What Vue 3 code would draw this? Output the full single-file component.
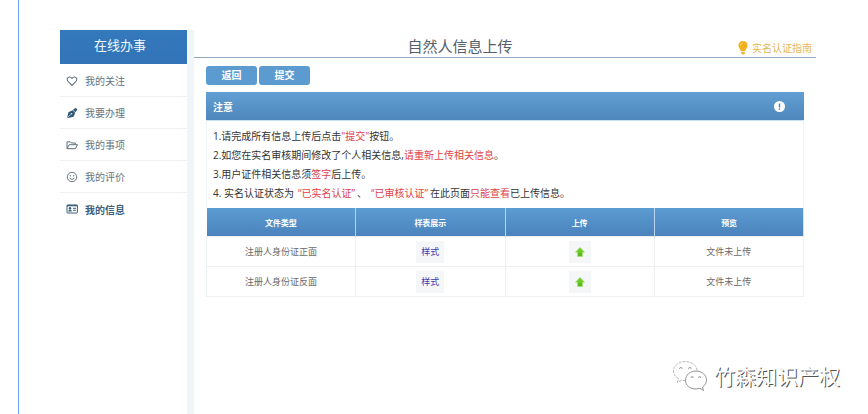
<script setup>
import { ref } from 'vue'

const active = ref('info')
const menu = [
  { id: 'heart', label: '我的关注' },
  { id: 'pen', label: '我要办理' },
  { id: 'folder', label: '我的事项' },
  { id: 'smile', label: '我的评价' },
  { id: 'info', label: '我的信息' },
]
const columns = ['文件类型', '样表展示', '上传', '预览']
const files = [
  { name: '注册人身份证正面', status: '文件未上传' },
  { name: '注册人身份证反面', status: '文件未上传' },
]
</script>

<template>
  <div class="page">
    <div class="layout">
      <aside class="sidebar">
        <h2 class="side-title">在线办事</h2>
        <nav class="side-nav">
          <a
            v-for="item in menu"
            :key="item.id"
            href="#"
            class="side-link"
            :class="{ active: item.id === active }"
            @click.prevent="active = item.id"
          >
            <svg v-if="item.id === 'heart'" class="side-icon" viewBox="0 0 12 12">
              <path d="M6 10.3 2 6.4C.6 4.9 1 2.3 3.3 2 4.6 1.900 5.500 2.700 6 3.500 6.500 2.700 7.400 1.900 8.700 2 11 2.300 11.400 4.900 10 6.400Z" fill="none" stroke="#647480" stroke-width="1.1" stroke-linejoin="round" />
            </svg>
            <svg v-else-if="item.id === 'pen'" class="side-icon" viewBox="0 0 12 12">
              <path d="M1.2 10.8 2.4 5.2 6.6 3.2 9.200 5.800 7.600 9.800 2 11Z" fill="#315878" />
              <path d="M7 3 8.500 1.400Q9.500.5 10.600 1.500 11.600 2.500 10.700 3.500L9.300 5.300Z" fill="#315878" />
              <path d="M1.600 10.500 4.800 7.300" stroke="#dfe8ef" stroke-width=".7" />
              <circle cx="5.500" cy="6.700" r=".8" fill="#dfe8ef" />
            </svg>
            <svg v-else-if="item.id === 'folder'" class="side-icon" viewBox="0 0 12 12">
              <path d="M1 9.500V2.800H4.200L5.300 4H9.300V5.700M1 9.700 3.200 5.700H11.500L9.400 9.700Z" fill="none" stroke="#5d717e" stroke-width="1" stroke-linejoin="round" />
            </svg>
            <svg v-else-if="item.id === 'smile'" class="side-icon" viewBox="0 0 12 12">
              <circle cx="6" cy="6" r="4.700" fill="none" stroke="#6b7880" stroke-width="1" />
              <path d="M3.600 7.200Q6 9.700 8.400 7.200" fill="none" stroke="#6b7880" stroke-width="1" />
              <circle cx="4.300" cy="4.700" r=".7" fill="#6b7880" />
              <circle cx="7.700" cy="4.700" r=".7" fill="#6b7880" />
            </svg>
            <svg v-else class="side-icon" viewBox="0 0 12 12">
              <rect x="1" y="2" width="10.400" height="8" rx=".6" fill="#fff" stroke="#3b5f7c" />
              <path d="M1 2.600H11.400" stroke="#3b5f7c" stroke-width="1.400" />
              <circle cx="4" cy="5.200" r="1.200" fill="#3b5f7c" />
              <path d="M2.200 8.500Q2.400 6.500 4 6.500T5.800 8.500Z" fill="#3b5f7c" />
              <path d="M7 5.300H10M7 7.300H10" stroke="#3b5f7c" stroke-width="1" />
            </svg>
            <span>{{ item.label }}</span>
          </a>
        </nav>
      </aside>

      <main class="main">
        <header class="main-head">
          <h1>自然人信息上传</h1>
          <a href="#" class="guide">
            <svg class="bulb" viewBox="0 0 10 14">
              <path d="M5 0C2.100 0 .4 2 .4 4.500.4 6.900 2.300 7.800 2.800 10H7.200C7.700 7.800 9.600 6.900 9.600 4.500 9.600 2 7.900 0 5 0Z" fill="#f2b01c" />
              <path d="M3.100 10.700H6.900V12.200L5.900 13.500H4.100L3.100 12.200Z" fill="#edb945" />
              <path d="M2.400 4.300Q2.600 2.300 4.700 2" fill="none" stroke="#ffe49a" stroke-width=".8" />
            </svg>
            <span>实名认证指南</span>
          </a>
        </header>

        <div class="content">
          <div class="actions">
            <button type="button" class="btn">返回</button>
            <button type="button" class="btn">提交</button>
          </div>

          <section class="notice">
            <div class="notice-head">
              <h3>注意</h3>
              <svg class="alert" viewBox="0 0 10 10">
                <circle cx="5" cy="5" r="5" fill="#fff" />
                <path d="M5 2.200V5.800M5 6.700V7.900" stroke="#4a84b8" stroke-width="1.300" />
              </svg>
            </div>
            <div class="notice-body">
              <p>1.请完成所有信息上传后点击<em>"提交"</em>按钮。</p>
              <p>2.如您在实名审核期间修改了个人相关信息,<em>请重新上传相关信息</em>。</p>
              <p>3.用户证件相关信息须<em>签字</em>后上传。</p>
              <p>4. 实名认证状态为<em class="quoted">“已实名认证”</em>、<em class="quoted">“已审核认证”</em>在此页面<em>只能查看</em>已上传信息。</p>
            </div>
          </section>

          <table class="files">
            <thead>
              <tr>
                <th v-for="c in columns" :key="c" scope="col">{{ c }}</th>
              </tr>
            </thead>
            <tbody>
              <tr v-for="f in files" :key="f.name">
                <td>{{ f.name }}</td>
                <td><a href="#" class="sample">样式</a></td>
                <td>
                  <button type="button" class="upload" :aria-label="'上传' + f.name">
                    <svg viewBox="0 0 10 10">
                      <path d="M5 .5 9.500 5.200H7.400V9.500H2.600V5.200H.5Z" fill="#6ccb25" stroke="#9bdc67" stroke-width=".6" stroke-linejoin="round" />
                      <path d="M3.200 6H6.800V9H3.200Z" fill="#55b81e" />
                    </svg>
                  </button>
                </td>
                <td>{{ f.status }}</td>
              </tr>
            </tbody>
          </table>
        </div>
      </main>
    </div>

    <div class="brand">
      <svg class="brand-icon" viewBox="0 0 36 32">
        <g fill="#fff" stroke-width=".8">
          <path d="M5 22.500 7 19C3.500 17 1.500 14 1.500 11 1.500 5.500 6.800 1.500 13.300 1.500S25 5.500 25 11 19.800 20.700 13.300 20.700L9.500 20.300Z" stroke="#aaa" stroke-dasharray="3 1" />
          <path d="M31.500 30.500 30.500 27C33 25.200 34.500 23 34.500 20.300 34.500 15 29.800 11 24 11S13.500 15 13.500 20.300 18.200 29 24 29L28 28.300Z" stroke="#777" />
        </g>
        <g fill="none" stroke="#888" stroke-width=".9">
          <path d="M7.500 8.800a1.300 1.300 0 0 1 2.600 0M16.500 8.800a1.300 1.300 0 1 1 2.600 0M19 17.800a1.200 1.200 0 0 1 2.400 0M26.500 17.800a1.200 1.200 0 0 1 2.400 0" />
        </g>
      </svg>
      <span>竹森知识产权</span>
    </div>
  </div>
</template>

<style>
body {
  background: #fff;
}
</style>

<style scoped>
.page {
  position: relative;
  box-sizing: border-box;
  min-height: 100vh;
  margin-left: 18px;
  padding: 30px 52px 0 41px;
  border-left: 1px solid #6ea2f5;
  display: flex;
  font-family: "Open Sans", "Noto Sans CJK SC", sans-serif;
  font-size: 10px;
  color: #333;
}
h1, h2, h3, p {
  margin: 0;
  font-weight: 400;
}
a {
  text-decoration: none;
}
.layout {
  flex: 1;
  display: flex;
}
.sidebar {
  flex: 0 0 127px;
}
.side-title {
  height: 34px;
  line-height: 30px;
  background: linear-gradient(#3479bc, #3173b6);
  color: #eef6fc;
  font-size: 13px;
  text-align: center;
  padding-right: 7px;
}
.side-nav {
  padding-top: 1px;
}
.side-link {
  display: flex;
  align-items: center;
  gap: 7px;
  box-sizing: border-box;
  height: 32px;
  padding-left: 6px;
  border-bottom: 1px solid #edf0f2;
  color: #66737d;
}
.side-link:last-child {
  border-bottom: 0;
}
.side-link.active {
  color: #3d5f7e;
  font-weight: 700;
}
.side-icon {
  width: 12px;
  height: 12px;
}
.main {
  flex: 1;
  min-width: 0;
  border-left: 7px solid #f0f5f7;
}
.main-head {
  display: flex;
  align-items: center;
  height: 27px;
  padding: 0 4px 0 0;
  border-bottom: 1px solid #90a9bf;
}
.main-head h1 {
  flex: 1;
  padding-top: 5px;
  text-align: center;
  font-size: 15px;
  line-height: 22px;
  color: #53606b;
}
.guide {
  display: flex;
  align-items: center;
  gap: 4px;
  margin-left: 12px;
  padding-top: 8px;
  color: #e3b75c;
}
.bulb {
  width: 10px;
  height: 14px;
}
.content {
  padding: 8px 12px;
}
.actions {
  display: flex;
  gap: 2px;
  margin-bottom: 7px;
}
.btn {
  width: 51px;
  height: 19px;
  padding: 0;
  border: 0;
  border-radius: 3px;
  background: #5c9bcf;
  color: #fff;
  font: 700 10px/19px "Open Sans", "Noto Sans CJK SC", sans-serif;
}
.notice-head {
  display: flex;
  align-items: center;
  justify-content: space-between;
  height: 28px;
  padding: 0 19px 0 7px;
  background: linear-gradient(#629fd2, #4e87bc);
  color: #fff;
}
.notice-head h3 {
  font-size: 10px;
  font-weight: 700;
}
.alert {
  width: 11px;
  height: 11px;
}
.notice-body {
  padding: 6px 6px 5px;
  border: 1px solid #edf3f7;
  border-top-color: #c6e2f4;
  border-bottom: 0;
  line-height: 19px;
}
.notice-body em {
  font-style: normal;
  color: #dd4248;
}
.notice-body .quoted {
  padding: 0 2px 0 4px;
}
.files {
  width: 100%;
  border-collapse: collapse;
  table-layout: fixed;
  text-align: center;
  font-size: 9px;
}
.files thead {
  background: linear-gradient(#5b9cd2, #4a82bb);
}
.files th {
  height: 28px;
  padding: 0;
  border-right: 1px solid #b9d5ec;
  color: #fff;
  font-size: 8px;
  font-weight: 700;
}
.files th:last-child {
  border-right: 0;
}
.files td {
  height: 29px;
  padding: 0;
  border: 1px solid #edeff1;
  color: #6a6a6a;
}
.sample,
.upload {
  display: inline-flex;
  align-items: center;
  justify-content: center;
  height: 22px;
  background: #f5f6f8;
  vertical-align: middle;
}
.sample {
  width: 28px;
  color: #4436b0;
}
.upload {
  width: 22px;
  padding: 0;
  border: 0;
}
.upload svg {
  width: 10px;
  height: 10px;
}
.brand {
  position: absolute;
  right: 28px;
  bottom: 22px;
  display: flex;
  align-items: center;
  gap: 6px;
  color: #fff;
  font-size: 21px;
  line-height: 32px;
  text-shadow: 1px 1px 0 #555;
}
.brand-icon {
  width: 36px;
  height: 32px;
}
</style>
